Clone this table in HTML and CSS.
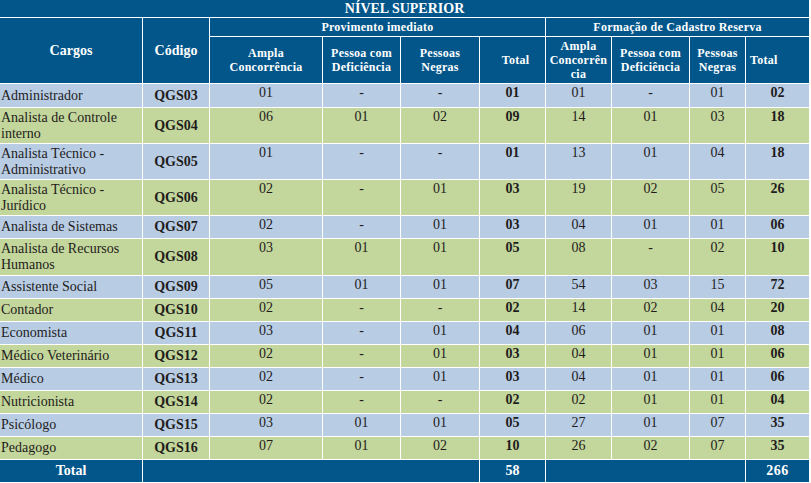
FILE: index.html
```html
<!DOCTYPE html>
<html lang="pt-BR">
<head>
<meta charset="utf-8">
<title>Nível Superior</title>
<link rel="stylesheet" href="styles.css">
</head>
<body>
<table class="sheet">
  <colgroup>
    <col class="c-cargo"><col class="c-cod"><col class="c-amp"><col class="c-pcd"><col class="c-neg"><col class="c-tot">
    <col class="c-amp2"><col class="c-pcd2"><col class="c-neg2"><col class="c-tot2">
  </colgroup>
  <thead>
    <tr class="h-title"><th colspan="10" class="title">NÍVEL SUPERIOR</th></tr>
    <tr class="h-group">
      <th rowspan="2" class="big">Cargos</th>
      <th rowspan="2" class="big">Código</th>
      <th colspan="4">Provimento imediato</th>
      <th colspan="4">Formação de Cadastro Reserva</th>
    </tr>
    <tr class="h-sub">
      <th>Ampla<br>Concorrência</th>
      <th>Pessoa com<br>Deficiência</th>
      <th>Pessoas<br>Negras</th>
      <th class="tot-a">Total</th>
      <th>Ampla<br>Concorrên<br>cia</th>
      <th>Pessoa com<br>Deficiência</th>
      <th>Pessoas<br>Negras</th>
      <th class="tot-b">Total</th>
    </tr>
  </thead>
  <tbody>
    <tr class="blue r23"><td class="cargo">Administrador</td><td class="cod">QGS03</td><td>01</td><td>-</td><td>-</td><td class="b">01</td><td>01</td><td>-</td><td>01</td><td class="b">02</td></tr>
    <tr class="green r35"><td class="cargo">Analista de Controle interno</td><td class="cod">QGS04</td><td>06</td><td>01</td><td>02</td><td class="b">09</td><td>14</td><td>01</td><td>03</td><td class="b">18</td></tr>
    <tr class="blue r35"><td class="cargo">Analista Técnico - Administrativo</td><td class="cod">QGS05</td><td>01</td><td>-</td><td>-</td><td class="b">01</td><td>13</td><td>01</td><td>04</td><td class="b">18</td></tr>
    <tr class="green r35"><td class="cargo">Analista Técnico - Jurídico</td><td class="cod">QGS06</td><td>02</td><td>-</td><td>01</td><td class="b">03</td><td>19</td><td>02</td><td>05</td><td class="b">26</td></tr>
    <tr class="blue r22"><td class="cargo">Analista de Sistemas</td><td class="cod">QGS07</td><td>02</td><td>-</td><td>01</td><td class="b">03</td><td>04</td><td>01</td><td>01</td><td class="b">06</td></tr>
    <tr class="green r36"><td class="cargo">Analista de Recursos Humanos</td><td class="cod">QGS08</td><td>03</td><td>01</td><td>01</td><td class="b">05</td><td>08</td><td>-</td><td>02</td><td class="b">10</td></tr>
    <tr class="blue r22"><td class="cargo">Assistente Social</td><td class="cod">QGS09</td><td>05</td><td>01</td><td>01</td><td class="b">07</td><td>54</td><td>03</td><td>15</td><td class="b">72</td></tr>
    <tr class="green r22"><td class="cargo">Contador</td><td class="cod">QGS10</td><td>02</td><td>-</td><td>-</td><td class="b">02</td><td>14</td><td>02</td><td>04</td><td class="b">20</td></tr>
    <tr class="blue r22"><td class="cargo">Economista</td><td class="cod">QGS11</td><td>03</td><td>-</td><td>01</td><td class="b">04</td><td>06</td><td>01</td><td>01</td><td class="b">08</td></tr>
    <tr class="green r22"><td class="cargo">Médico Veterinário</td><td class="cod">QGS12</td><td>02</td><td>-</td><td>01</td><td class="b">03</td><td>04</td><td>01</td><td>01</td><td class="b">06</td></tr>
    <tr class="blue r22"><td class="cargo">Médico</td><td class="cod">QGS13</td><td>02</td><td>-</td><td>01</td><td class="b">03</td><td>04</td><td>01</td><td>01</td><td class="b">06</td></tr>
    <tr class="green r22"><td class="cargo">Nutricionista</td><td class="cod">QGS14</td><td>02</td><td>-</td><td>-</td><td class="b">02</td><td>02</td><td>01</td><td>01</td><td class="b">04</td></tr>
    <tr class="blue r22"><td class="cargo">Psicólogo</td><td class="cod">QGS15</td><td>03</td><td>01</td><td>01</td><td class="b">05</td><td>27</td><td>01</td><td>07</td><td class="b">35</td></tr>
    <tr class="green r22"><td class="cargo">Pedagogo</td><td class="cod">QGS16</td><td>07</td><td>01</td><td>02</td><td class="b">10</td><td>26</td><td>02</td><td>07</td><td class="b">35</td></tr>
  </tbody>
  <tfoot>
    <tr class="r22"><td class="ft-label">Total</td><td colspan="4"></td><td class="ft-num">58</td><td colspan="3"></td><td class="ft-num wide">266</td></tr>
  </tfoot>
</table>
</body>
</html>
```

FILE: styles.css
```css
html, body {
  margin: 0;
  padding: 0;
  background: #ffffff;
}

.sheet {
  margin: -1px 0 0 -1px;
  border-collapse: separate;
  border-spacing: 1px;
  table-layout: fixed;
  width: 811px;
  font-family: "Liberation Serif", "Times New Roman", serif;
  color: #1f1c1c;
}

.c-cargo { width: 142px; }
.c-cod { width: 66px; }
.c-amp { width: 112px; }
.c-pcd { width: 77px; }
.c-neg { width: 78px; }
.c-tot { width: 65px; }
.c-amp2 { width: 65px; }
.c-pcd2 { width: 77px; }
.c-neg2 { width: 55px; }
.c-tot2 { width: 63px; }

th, td {
  padding: 0;
  overflow: hidden;
}

th {
  background: #02568a;
  color: #ffffff;
  font-weight: bold;
  font-size: 12px;
  letter-spacing: 0.25px;
  line-height: 14px;
  text-align: center;
  vertical-align: middle;
}

.h-title { height: 17px; }
.h-group { height: 18px; }
.h-sub { height: 46px; }

th.title {
  font-size: 14px;
  letter-spacing: 0;
  line-height: 16px;
}

th.big {
  font-size: 14px;
  letter-spacing: 0;
}

th.tot-a { padding-left: 6px; }
th.tot-b { text-align: left; padding-left: 4px; }

.r22 { height: 22px; }
.r23 { height: 23px; }
.r35 { height: 35px; }
.r36 { height: 36px; }

.blue td { background: #b8cce4; }
.green td { background: #c3d69b; }

td {
  font-size: 14px;
  line-height: 18px;
  text-align: center;
  vertical-align: top;
}

td.cargo {
  text-align: left;
  vertical-align: middle;
  line-height: 16px;
  padding-left: 1px;
}

td.cod {
  font-weight: bold;
  vertical-align: middle;
}

td.b { font-weight: bold; }

tfoot td {
  background: #02568a;
  color: #ffffff;
  font-weight: bold;
  vertical-align: middle;
}

td.ft-num.wide { letter-spacing: 0.5px; }
```
